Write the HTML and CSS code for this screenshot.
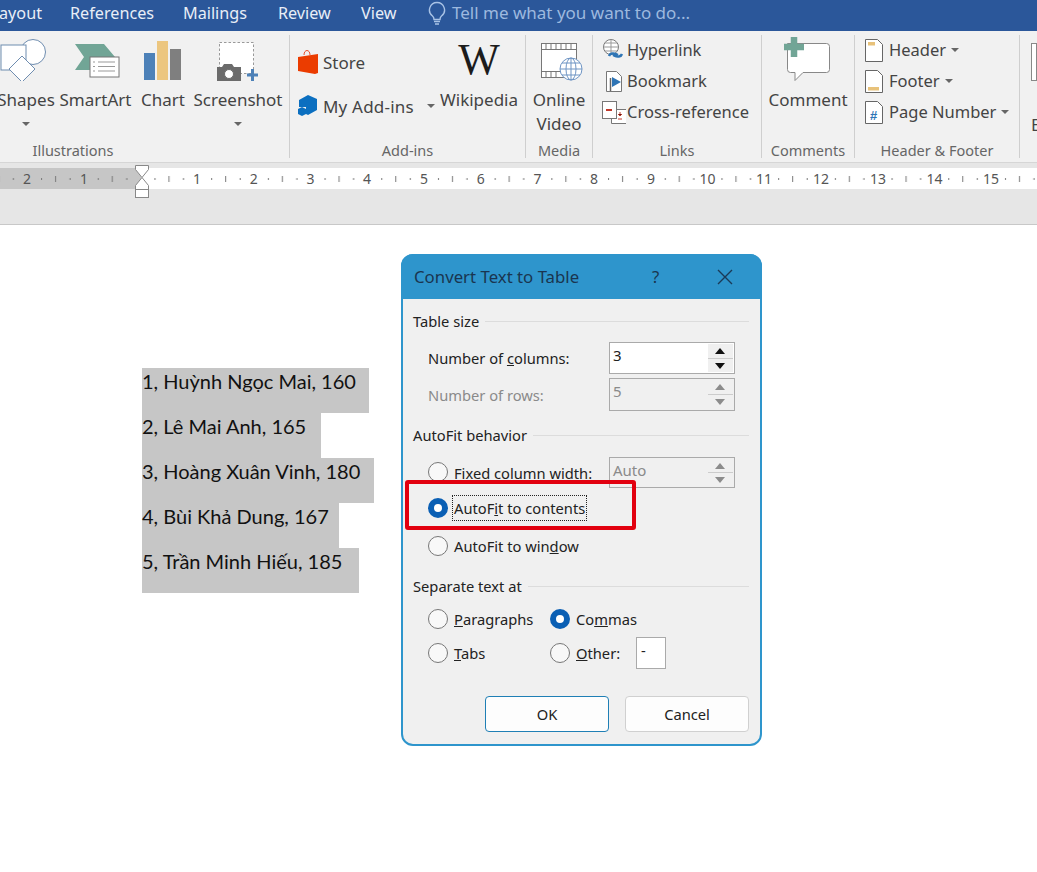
FILE: index.html
```html
<!DOCTYPE html>
<html lang="vi">
<head>
<meta charset="utf-8">
<title>Convert Text to Table</title>
<link rel="stylesheet" href="styles.css">
</head>
<body>
<div class="app">
  <nav class="tabs">
    <span class="tab tab-layout">ayout</span>
    <span class="tab tab-ref">References</span>
    <span class="tab tab-mail">Mailings</span>
    <span class="tab tab-rev">Review</span>
    <span class="tab tab-view">View</span>
    <svg class="bulb" width="18" height="24" viewBox="0 0 18 24"><path d="M9 1.500a7.500 7.500 0 0 0-4.500 13.500c1 .9 1.500 2 1.500 3.500h6c0-1.500.5-2.600 1.500-3.500A7.500 7.500 0 0 0 9 1.500z" fill="none" stroke="#a9c3e6" stroke-width="1.400"/><path d="M6 20.500h6M7 23h4" stroke="#a9c3e6" stroke-width="1.600"/></svg>
    <span class="tell">Tell me what you want to do...</span>
  </nav>

  <section class="ribbon">
    <div class="group g-ill">
      <div class="g-body">
        <div class="big b-shapes up4">
          <svg width="60" height="50" viewBox="0 0 60 50"><circle cx="37" cy="21" r="12.500" fill="#fff" stroke="#6f8db0" stroke-width="1"/><rect x="5" y="14" width="25" height="25" fill="#fff" stroke="#6f8db0"/><path d="M26 25l13 13-13 13-13-13z" fill="#fff" stroke="#6f8db0"/></svg>
          <span class="big-label">Shapes</span><i class="caret caret-big"></i>
        </div>
        <div class="big b-smart up4">
          <svg width="50" height="50" viewBox="0 0 50 50"><path d="M4 13h29l11 13-11 13H4l9-13z" fill="#71a596"/><rect x="19" y="26" width="29" height="20" fill="#fff" stroke="#777"/><path d="M27 31h17M27 35.500h17M27 40h17M22 31h2M22 35.500h2M22 40h2" stroke="#999"/></svg>
          <span class="big-label">SmartArt</span>
        </div>
        <div class="big b-chart up4">
          <svg width="38" height="50" viewBox="0 0 38 50"><rect x="0" y="22" width="11" height="27" fill="#4d81b8"/><rect x="13" y="10" width="11" height="39" fill="#ecc67f"/><rect x="26" y="18" width="11" height="31" fill="#7f7f7f"/></svg>
          <span class="big-label">Chart</span>
        </div>
        <div class="big b-shot up4">
          <svg width="60" height="50" viewBox="0 0 60 50"><rect x="11.500" y="11.500" width="34" height="31" fill="#fff" stroke="#999" stroke-dasharray="2.500 2"/><path d="M9 36h5l2-3h8l2 3h7v15H9z" fill="#6b6b6b"/><circle cx="21" cy="43" r="4.500" fill="#fff" stroke="#6b6b6b"/><path d="M39 44h11M44.500 38v12" stroke="#4d81b8" stroke-width="3"/></svg>
          <span class="big-label">Screenshot</span><i class="caret caret-big"></i>
        </div>
      </div>
      <div class="g-label">Illustrations</div>
    </div>

    <div class="group g-add">
      <div class="g-body">
        <div class="add-list">
          <div class="row r-store">
            <svg width="22" height="26" viewBox="0 0 22 26"><path d="M7 6c0-6 6-6 6 0" fill="none" stroke="#e8502a"/><path d="M1 8l20-3v19l-3 1-17-3z" fill="#eb3c00"/></svg>
            <span>Store</span>
          </div>
          <div class="row r-addin">
            <svg width="22" height="24" viewBox="0 0 22 24"><path d="M11 1l9 4v11l-9 5-2-1v-7H2V6z" fill="#0b6fc0"/><path d="M5 13l4 2v5l-4 2-4-2v-5z" fill="#0b6fc0"/></svg>
            <span>My Add-ins</span><i class="caret caret-addin"></i>
          </div>
        </div>
        <div class="big b-wiki">
          <div class="wiki-w">W</div>
          <span class="big-label">Wikipedia</span>
        </div>
      </div>
      <div class="g-label">Add-ins</div>
    </div>

    <div class="group g-media">
      <div class="g-body">
        <div class="big b-video up4">
          <svg width="54" height="50" viewBox="0 0 54 50"><g transform="translate(1 0)"><rect x="8.500" y="12.500" width="35" height="34" fill="#fff" stroke="#777"/><path d="M8.500 18.500h35M8.500 40.500h35M13 12.500v6M18 12.500v6M23 12.500v6M28 12.500v6M33 12.500v6M38 12.500v6M13 40.500v6M18 40.500v6M23 40.500v6" stroke="#777"/><circle cx="38" cy="38" r="11" fill="#fff" stroke="#6f95c4"/><path d="M27 38h22M29 32h18M29 44h18M38 27v22" stroke="#6f95c4"/><ellipse cx="38" cy="38" rx="5" ry="11" fill="none" stroke="#6f95c4"/></g></svg>
          <span class="big-label">Online<br>Video</span>
        </div>
      </div>
      <div class="g-label">Media</div>
    </div>

    <div class="group g-links">
      <div class="g-body col">
        <div class="row small">
          <svg width="24" height="26" viewBox="0 0 24 26"><circle cx="9" cy="10" r="7.500" fill="#fff" stroke="#777"/><path d="M1.500 10h15M9 2.500v15M3 6h12M3 14h12" stroke="#999"/><path d="M7 19c1-3 5-3 7-2l2 1M20 17c-1 3-5 3-7 2l-2-1" fill="none" stroke="#2f75b5" stroke-width="2.400"/></svg>
          <span>Hyperlink</span>
        </div>
        <div class="row small">
          <svg width="24" height="26" viewBox="0 0 24 26"><path d="M4.500 3.500h10l5 5v15h-15z" fill="#fff" stroke="#777"/><path d="M8.500 10v13" stroke="#666" stroke-width="1.500"/><path d="M10 9l9 5-9 5z" fill="#2f75b5"/></svg>
          <span>Bookmark</span>
        </div>
        <div class="row small">
          <svg width="24" height="26" viewBox="0 0 24 26"><path d="M9.500 10.500h15v14h-15z" fill="#fff" stroke="#777"/><rect x="0.500" y="2.500" width="14" height="17" fill="#fff" stroke="#777"/><path d="M4 11h6" stroke="#c0392b" stroke-width="2"/><path d="M18 13v4M16 15l2 2 2-2M16 20h4" stroke="#c0392b"/></svg>
          <span>Cross-reference</span>
        </div>
      </div>
      <div class="g-label">Links</div>
    </div>

    <div class="group g-comm">
      <div class="g-body">
        <div class="big b-comment">
          <svg width="50" height="50" viewBox="0 0 50 50"><path d="M4.500 8.500h39a3 3 0 0 1 3 3v23a3 3 0 0 1-3 3H20l-8 8v-8H7.500a3 3 0 0 1-3-3z" fill="#fff" stroke="#888"/><path d="M1 12h20M11 2v20" stroke="#71a596" stroke-width="6.500"/></svg>
          <span class="big-label">Comment</span>
        </div>
      </div>
      <div class="g-label">Comments</div>
    </div>

    <div class="group g-hf">
      <div class="g-body col">
        <div class="row small">
          <svg width="24" height="26" viewBox="0 0 24 26"><path d="M1.500 2.500h12l5 5v17h-17z" fill="#fff" stroke="#666"/><rect x="4" y="5" width="7" height="3.500" fill="#e8c27a"/></svg>
          <span>Header</span><i class="caret"></i>
        </div>
        <div class="row small">
          <svg width="24" height="26" viewBox="0 0 24 26"><path d="M1.500 2.500h12l5 5v17h-17z" fill="#fff" stroke="#666"/><rect x="4" y="19" width="11" height="3.500" fill="#e8c27a"/></svg>
          <span>Footer</span><i class="caret"></i>
        </div>
        <div class="row small">
          <svg width="24" height="26" viewBox="0 0 24 26"><path d="M1.500 2.500h12l5 5v17h-17z" fill="#fff" stroke="#666"/><text x="6" y="21" class="hash">#</text></svg>
          <span>Page Number</span><i class="caret"></i>
        </div>
      </div>
      <div class="g-label">Header &amp; Footer</div>
    </div>

    <div class="group g-last">
      <div class="g-body"><div class="last-page"></div><span class="last-e">E</span></div>
    </div>
  </section>

  <div class="ruler-zone">
    <svg class="ruler" width="1037" height="21" viewBox="0 0 1037 21">
      <defs>
        <pattern id="ticks" x="140.500" y="0" width="56.700" height="21" patternUnits="userSpaceOnUse">
          <rect x="14" y="10" width="1" height="2" fill="#777"/>
          <rect x="28" y="8" width="1" height="6" fill="#777"/>
          <rect x="42.500" y="10" width="1" height="2" fill="#777"/>
        </pattern>
      </defs>
      <rect width="141" height="21" fill="#c6c6c6"/>
      <rect x="141" width="896" height="21" fill="#fff"/>
      <rect width="1037" height="21" fill="url(#ticks)"/>
      <g class="rnum">
        <text x="27" y="16">2</text><text x="84" y="16">1</text>
        <text x="197" y="16">1</text><text x="253.700" y="16">2</text><text x="310.400" y="16">3</text><text x="367" y="16">4</text><text x="424" y="16">5</text><text x="480.700" y="16">6</text><text x="537.400" y="16">7</text><text x="594" y="16">8</text><text x="651" y="16">9</text><text x="707.500" y="16">10</text><text x="764" y="16">11</text><text x="821" y="16">12</text><text x="878" y="16">13</text><text x="934.500" y="16">14</text><text x="991" y="16">15</text>
      </g>
    </svg>
    <svg class="marker" width="14" height="34" viewBox="0 0 14 34"><path d="M.5.500h13v4l-6.500 8 6.500 8v4H.500v-4l6.500-8-6.500-8z" fill="#fff" stroke="#888"/><rect x=".5" y="24.500" width="13" height="8" fill="#fff" stroke="#888"/></svg>
  </div>

  <main class="page">
    <div class="doc">
      <p class="ln w1">1, Huỳnh Ngọc Mai, 160</p>
      <p class="ln w2">2, Lê Mai Anh, 165</p>
      <p class="ln w3">3, Hoàng Xuân Vinh, 180</p>
      <p class="ln w4">4, Bùi Khả Dung, 167</p>
      <p class="ln w5">5, Trần Minh Hiếu, 185</p>
    </div>
  </main>

  <div class="dialog">
    <header class="d-title">
      <span class="d-name">Convert Text to Table</span>
      <span class="d-help">?</span>
      <svg class="d-close" width="16" height="16" viewBox="0 0 16 16"><path d="M1 1l14 14M15 1L1 15" stroke="#1b3a57" stroke-width="1.400"/></svg>
    </header>
    <div class="d-body">
      <div class="d-head h1"><span>Table size</span></div>
      <div class="field f1">
        <label>Number of <u>c</u>olumns:</label>
        <div class="spin"><span class="spin-v">3</span><div class="arrows"><b class="up"></b><b class="down"></b></div></div>
      </div>
      <div class="field f2 off">
        <label>Number of rows:</label>
        <div class="spin"><span class="spin-v">5</span><div class="arrows"><b class="up"></b><b class="down"></b></div></div>
      </div>
      <div class="d-head h2"><span>AutoFit behavior</span></div>
      <div class="field f3">
        <div class="opt"><i class="radio"></i><label>Fixed column width:</label></div>
        <div class="spin off"><span class="spin-v">Auto</span><div class="arrows"><b class="up"></b><b class="down"></b></div></div>
      </div>
      <div class="field f4">
        <div class="opt"><i class="radio on"></i><label class="focus">AutoF<u>i</u>t to contents</label></div>
      </div>
      <div class="field f5">
        <div class="opt"><i class="radio"></i><label>AutoFit to win<u>d</u>ow</label></div>
      </div>
      <div class="d-head h3"><span>Separate text at</span></div>
      <div class="sep-grid">
        <div class="opt"><i class="radio"></i><label><u>P</u>aragraphs</label></div>
        <div class="opt"><i class="radio on"></i><label>Co<u>m</u>mas</label></div>
        <div class="opt"><i class="radio"></i><label><u>T</u>abs</label></div>
        <div class="opt"><i class="radio"></i><label class="other-l"><u>O</u>ther:</label><span class="other-in">-</span></div>
      </div>
      <div class="d-btns">
        <button class="btn primary">OK</button>
        <button class="btn">Cancel</button>
      </div>
    </div>
    <div class="callout"></div>
  </div>
</div>
</body>
</html>
```

FILE: styles.css
```css
* { box-sizing: border-box; }
html, body { margin: 0; padding: 0; }
body { background: #fff; font-family: "Noto Sans", "Open Sans", sans-serif; color: #444; }
.app { position: relative; width: 1037px; height: 872px; overflow: hidden; }

/* Tabs */
.tabs { height: 31px; background: #2b579a; display: flex; align-items: center; padding-bottom: 6px; color: #e8eef7; font-size: 16.200px; white-space: nowrap; }
.tab-layout { margin-left: -1px; width: 71px; }
.tab-ref { width: 113px; }
.tab-mail { width: 95px; }
.tab-rev { width: 83px; }
.tab-view { width: 67px; }
.bulb { flex: none; }
.tell { margin-left: 6px; color: #9db9df; font-size: 17px; }

/* Ribbon */
.ribbon { height: 131px; background: #f1f1f1; display: flex; padding-top: 4px; }
.group { display: flex; flex-direction: column; height: 123px; border-right: 1px solid #cfcfcf; flex: none; }
.g-body { height: 106px; display: flex; }
.g-body.col { flex-direction: column; margin-top: -1px; height: 107px; }
.g-label { height: 17px; line-height: 19px; font-size: 14.500px; color: #666; text-align: center; }
.g-ill { width: 290px; }
.g-ill .g-label { width: 146px; }
.g-add { width: 236px; }
.g-media { width: 67px; }
.g-links { width: 169px; }
.g-comm { width: 93px; }
.g-hf { width: 165px; }
.g-last { border-right: 0; width: 17px; position: relative; }

.big { display: flex; flex-direction: column; align-items: center; flex: none; text-align: center; }
.big svg { flex: none; height: 50px; }
.up4 svg { margin-top: -4px; margin-bottom: 4px; }
.big-label { margin-top: 3px; font-size: 17px; line-height: 24px; white-space: nowrap; }
.caret { display: inline-block; width: 0; height: 0; border: 4px solid transparent; border-top: 4px solid #666; border-bottom: 0; margin-left: 4px; }
.caret-big { margin: 10px 0 0; }
.b-shapes { width: 54px; margin-left: -1px; }
.b-smart { width: 71px; margin-left: 7px; }
.b-chart { width: 38px; margin-left: 13px; }
.b-shot { width: 88px; margin-left: 12px; }

.add-list { width: 150px; padding-left: 7px; display: flex; flex-direction: column; }
.row { display: flex; align-items: center; font-size: 17px; white-space: nowrap; }
.add-list .row { height: 44px; gap: 4px; }
.r-store { margin-top: 5px; }
.r-addin { margin-top: 0; }
.add-list .row svg { flex: none; }
.add-list .r-addin span { letter-spacing: .2px; }
.caret-addin { margin-left: 9px; }
.b-wiki { width: 78px; }
.wiki-w { height: 50px; font-family: "Liberation Serif", serif; font-size: 44px; line-height: 50px; color: #1c1c1c; }
.b-video { width: 66px; }
.row.small { height: 31px; font-size: 16.500px; gap: 1px; padding-left: 9px; }
.g-hf .row.small { gap: 1px; padding-left: 9px; }
.row.small svg { flex: none; }
.b-comment { width: 92px; }
.hash { font-family: "Liberation Sans", sans-serif; font-size: 13px; font-weight: 700; fill: #2f75b5; }
.last-page { width: 16px; height: 38px; margin: 8px 0 0 11px; background: #fff; border: 1px solid #888; }
.last-e { position: absolute; left: 11px; top: 78px; font-size: 17px; }

/* Ruler */
.ruler-zone { position: relative; height: 63px; background: #e6e6e6; border-top: 1px solid #d6d6d6; border-bottom: 1px solid #c8c8c8; padding-top: 5px; }
.ruler { display: block; }
.rnum text { font-family: "Noto Sans", sans-serif; font-size: 14px; fill: #555; text-anchor: middle; }
.marker { position: absolute; left: 135px; top: 2px; }

/* Document */
.page { padding: 143px 0 0 142px; }
.doc { display: flex; flex-direction: column; font-family: Lato, "Noto Sans", sans-serif; font-size: 20px; color: #111; }
.ln { margin: 0; height: 45px; line-height: 26px; background: #c6c6c6; white-space: nowrap; }
.w1 { width: 227px; }
.w2 { width: 179px; }
.w3 { width: 232px; }
.w4 { width: 197px; }
.w5 { width: 217px; }

/* Dialog */
.dialog { position: absolute; left: 401px; top: 254px; width: 361px; height: 492px; border: 2px solid #2e95cc; border-radius: 12px; background: #f0f0f0; color: #222; font-size: 14.700px; overflow: visible; }
.d-title { height: 45px; margin: -2px -2px 0; background: #2e95cc; border-radius: 12px 12px 0 0; display: flex; align-items: center; padding: 0 0 0 13px; color: #1a3550; font-size: 16.800px; }
.d-name { width: 238px; }
.d-help { width: 65px; }
.d-close { flex: none; }
.d-body { padding: 0 11px 0 10px; display: flex; flex-direction: column; }
.d-head { height: 24px; display: flex; align-items: center; gap: 6px; color: #222; }
.d-head::after { content: ""; flex: 1; height: 1px; background: #dcdcdc; }
.h1 { margin-top: 10px; }
.h2 { margin-top: 12px; }
.h3 { margin-top: 16px; }
.field { display: flex; align-items: center; justify-content: space-between; padding: 0 14px 0 15px; }
.f1 { height: 32px; margin-top: 9px; }
.f2 { height: 33px; margin-top: 4px; }
.f3 { height: 31px; margin-top: 10px; }
.f4 { height: 24px; margin-top: 8px; }
.f5 { height: 24px; margin-top: 14px; }
.off label, .off .spin-v { color: #8a8a8a; }
.spin { width: 126px; height: 100%; border: 1px solid #aaa; background: #fff; display: flex; justify-content: space-between; }
.off .spin, .spin.off { background: #f0f0f0; }
.spin-v { padding: 0 0 0 3px; font-size: 15px; line-height: 25px; }
.spin.off .spin-v { color: #8a8a8a; }
.arrows { width: 25px; display: flex; flex-direction: column; margin: 1px; gap: 1px; background: #ccc; }
.arrows b { flex: 1; background: #f0f0f0; position: relative; display: block; }
.arrows b::after { content: ""; position: absolute; left: 7px; top: 4px; border: 5px solid transparent; }
.up::after { border-bottom: 6px solid #111 !important; border-top: 0 !important; }
.down::after { border-top: 6px solid #111 !important; border-bottom: 0 !important; }
.off .arrows b::after, .spin.off .arrows b::after { opacity: .45; }
.opt { display: flex; align-items: center; gap: 6px; white-space: nowrap; }
.radio { width: 20px; height: 20px; border: 1px solid #777; border-radius: 50%; background: #f8f8f8; flex: none; display: block; }
.f3 .radio { margin-top: -2px; }
.radio.on { border: 6px solid #0a5fb4; background: #fff; }
.focus { outline: 1px dotted #222; outline-offset: 0; padding: 0 1px; height: 24px; line-height: 24px; margin-left: -1px; }
.sep-grid { display: grid; grid-template-columns: 122px 1fr; grid-auto-rows: 30px; row-gap: 4px; margin: 6px 0 0 15px; }
.other-l { width: 54px; }
.other-in { width: 30px; height: 32px; background: #fff; border: 1px solid #aaa; padding-left: 4px; line-height: 24px; flex: none; }
.d-btns { display: flex; justify-content: flex-end; gap: 16px; margin-top: 28px; }
.btn { width: 124px; height: 36px; background: #fdfdfd; border: 1px solid #d0d0d0; border-radius: 4px; font: inherit; color: #222; }
.btn.primary { border-color: #1f7fb5; }
.callout { position: absolute; left: 2px; top: 224px; width: 231px; height: 50px; border: 4px solid #e2000f; border-radius: 3px; }
```
